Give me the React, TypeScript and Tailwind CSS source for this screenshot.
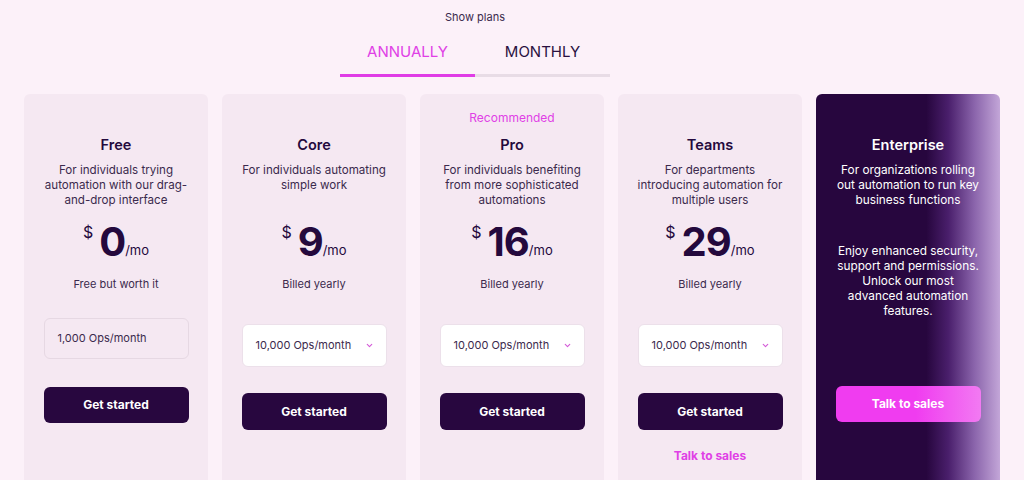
import { ChevronDown } from "lucide-react";

type Plan = {
  name: string;
  desc: string;
  price: string;
  note: string;
  ops: string;
  select: boolean;
  recommended?: boolean;
  sales?: boolean;
};

const plans: Plan[] = [
  {
    name: "Free",
    desc: "For individuals trying automation with our drag-and-drop interface",
    price: "0",
    note: "Free but worth it",
    ops: "1,000 Ops/month",
    select: false,
  },
  {
    name: "Core",
    desc: "For individuals automating simple work",
    price: "9",
    note: "Billed yearly",
    ops: "10,000 Ops/month",
    select: true,
  },
  {
    name: "Pro",
    desc: "For individuals benefiting from more sophisticated automations",
    price: "16",
    note: "Billed yearly",
    ops: "10,000 Ops/month",
    select: true,
    recommended: true,
  },
  {
    name: "Teams",
    desc: "For departments introducing automation for multiple users",
    price: "29",
    note: "Billed yearly",
    ops: "10,000 Ops/month",
    select: true,
    sales: true,
  },
];

function PlanCard({ plan }: { plan: Plan }) {
  return (
    <div className="w-[184px] h-[400px] shrink-0 rounded-[6px] bg-[#f5e8f2] px-[17px] pt-[16px] flex flex-col items-center text-center">
      <div className="h-[16px] text-[12px] leading-[16px] text-[#e040e6]">
        {plan.recommended ? "Recommended" : ""}
      </div>
      <h3 className="mt-[9px] text-[14.5px] leading-[20px] font-semibold text-[#24093d]">
        {plan.name}
      </h3>
      <p className="mt-[8px] w-[150px] h-[45px] text-[11.6px] leading-[15px] text-[#3b2a4d]">
        {plan.desc}
      </p>
      {/* 가격 */}
      <div className="mt-[4px] h-[46px] flex items-end justify-center text-[#24093d]">
        <span className="self-start mt-[11px] mr-[6px] text-[16px] leading-[18px]">$</span>
        <span className="text-[40px] leading-[40px] font-bold tracking-[-1px] mb-[-4px]">
          {plan.price}
        </span>
        <span className="text-[13px] leading-[16px]">/mo</span>
      </div>
      <div className="mt-[19px] text-[11px] leading-[14px] text-[#3b2a4d]">{plan.note}</div>
      {plan.select ? (
        <div className="mt-[33px] w-[145px] h-[43px] rounded-[6px] bg-white border border-[#ece0ea] flex items-center justify-between pl-[13px] pr-[12px] text-[11px] text-[#3b2a4d]">
          <span>{plan.ops}</span>
          <ChevronDown size={9} strokeWidth={3} className="text-[#d45ad8]" />
        </div>
      ) : (
        <div className="mt-[27px] w-[145px] h-[41px] rounded-[6px] border border-[#e6d8e3] bg-[#f5e8f2] flex items-center pl-[13px] text-[11px] text-[#3b2a4d]">
          {plan.ops}
        </div>
      )}
      <button
        className={`${plan.select ? "mt-[26px] h-[37px]" : "mt-[28px] h-[36px]"} w-[145px] rounded-[6px] bg-[#28073f] text-white text-[12px] font-bold`}
      >
        Get started
      </button>
      {plan.sales && (
        <div className="mt-[17px] text-[12px] font-bold text-[#e040e6]">Talk to sales</div>
      )}
    </div>
  );
}

export default function App() {
  return (
    <div
      className="w-[1024px] h-[480px] overflow-hidden bg-[#fcf1f9]"
      style={{ fontFamily: "Inter, 'Noto Sans', sans-serif" }}
    >
      <div className="w-[950px] flex flex-col items-center">
        <div className="pt-[9px] text-[11px] leading-[16px] text-[#3b2a4d]">Show plans</div>
        <div className="mt-[16px] flex w-[270px]">
          <div className="flex-1 flex flex-col items-center">
            <span className="text-[15px] leading-[22px] text-[#e040e6]">ANNUALLY</span>
            <div className="mt-[11px] h-[3px] w-full bg-[#e03ce6]" />
          </div>
          <div className="flex-1 flex flex-col items-center">
            <span className="text-[15px] leading-[22px] text-[#2a1040]">MONTHLY</span>
            <div className="mt-[11px] h-[3px] w-full bg-[#e8dce6]" />
          </div>
        </div>
      </div>

      <div className="mt-[17px] flex gap-[14px] px-[24px]">
        {plans.map((p) => (
          <PlanCard key={p.name} plan={p} />
        ))}

        {/* Enterprise */}
        <div className="w-[184px] h-[400px] shrink-0 rounded-[6px] bg-[linear-gradient(to_right,#27063e_0%,#27063e_60%,#4a1f6c_72%,#8a64ab_86%,#c3a6d8_100%)] px-[14px] pt-[16px] flex flex-col items-center text-center text-white">
          <div className="h-[16px]" />
          <h3 className="mt-[9px] text-[14.5px] leading-[20px] font-semibold">Enterprise</h3>
          <p className="mt-[8px] w-[146px] text-[11.8px] leading-[15px]">
            For organizations rolling out automation to run key business functions
          </p>
          <p className="mt-[36px] w-[146px] text-[11.8px] leading-[15px]">
            Enjoy enhanced security, support and permissions. Unlock our most advanced automation
            features.
          </p>
          <button className="mt-[67px] w-[145px] h-[36px] rounded-[6px] bg-[linear-gradient(to_right,#f03cf0,#f03cf0_55%,#f27af2)] text-white text-[12px] font-bold">
            Talk to sales
          </button>
        </div>
      </div>
    </div>
  );
}
